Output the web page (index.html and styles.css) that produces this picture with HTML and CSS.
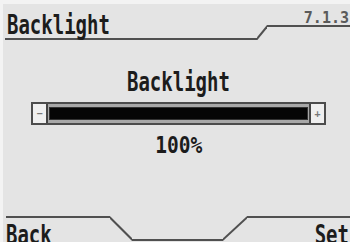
FILE: index.html
```html
<!DOCTYPE html>
<html>
<head>
<meta charset="utf-8">
<link rel="stylesheet" href="styles.css">
</head>
<body>
<div class="screen">
  <header class="topbar">
    <div class="title-tab"><span class="lcd lcd-left">Backlight</span></div>
    <svg class="diag" width="10" height="36" viewBox="0 0 10 36"><line x1="-0.5" y1="35.5" x2="10.5" y2="22"/></svg>
    <div class="ver-tab"><span class="ver">7.1.3</span></div>
  </header>
  <main class="content">
    <div class="heading"><span class="lcd lcd-center">Backlight</span></div>
    <div class="slider">
      <span class="cap">&minus;</span>
      <div class="track"><div class="fill" style="width:100%"></div></div>
      <span class="cap">+</span>
    </div>
    <div class="value"><span class="lcd lcd-center lcd-small">100%</span></div>
  </main>
  <footer class="softkeys">
    <div class="key key-left"><span class="lcd lcd-left">Back</span></div>
    <svg class="diag" width="22" height="26" viewBox="0 0 22 26"><line x1="-0.5" y1="1" x2="22.5" y2="24"/></svg>
    <div class="key-gap"></div>
    <svg class="diag" width="24" height="26" viewBox="0 0 24 26"><line x1="-0.5" y1="24" x2="24.5" y2="1"/></svg>
    <div class="key key-right"><span class="lcd lcd-right">Set</span></div>
  </footer>
</div>
</body>
</html>
```
FILE: styles.css
```css
html, body {
  margin: 0;
  padding: 0;
}
body {
  width: 350px;
  height: 242px;
  box-sizing: border-box;
  padding: 4px 0 0 3px;
  background: #f3f3f3;
  overflow: hidden;
  font-family: "DejaVu Sans Mono", monospace;
  font-weight: bold;
  color: #1c1c1c;
}
.screen {
  width: 347px;
  height: 238px;
  background: #e4e4e4;
  display: flex;
  flex-direction: column;
}
.lcd {
  display: inline-block;
  font-size: 26px;
  line-height: 25px;
  transform: scaleX(0.73);
  white-space: nowrap;
}
.lcd-left { transform-origin: left center; }
.lcd-right { transform-origin: right center; }
.lcd-center { transform-origin: center center; }
.lcd-small {
  font-size: 23px;
  line-height: 22px;
  transform: scaleX(0.85);
}

/* header */
.topbar {
  display: flex;
  align-items: flex-start;
  height: 36px;
}
.title-tab {
  width: 250px;
  margin-left: 2px;
  padding: 9px 0 0 2px;
  border-bottom: 2px solid #505050;
}
.diag {
  flex: none;
  display: block;
}
.diag line {
  stroke: #505050;
  stroke-width: 2;
}
.ver-tab {
  flex: 1;
  padding-top: 7px;
  border-bottom: 2px solid #505050;
  text-align: right;
  line-height: 14px;
}
.ver {
  font-size: 15px;
  color: #5a5a5a;
  padding-right: 1px;
}

/* content */
.content {
  display: flex;
  flex-direction: column;
  align-items: center;
  padding-top: 30px;
}
.heading {
  height: 25px;
  margin-left: 4px;
}
.slider {
  margin-top: 7px;
  margin-left: 4px;
  width: 295px;
  height: 23px;
  box-sizing: border-box;
  border: 2px solid #4c4c4c;
  background: #efefef;
  display: flex;
  align-items: stretch;
}
.cap {
  width: 13px;
  display: flex;
  align-items: center;
  justify-content: center;
  font-size: 10px;
  color: #777;
}
.track {
  flex: 1;
  border-left: 2px solid #444;
  border-right: 2px solid #444;
  background: #a8a8a8;
  padding: 3px 1px;
  display: flex;
}
.fill {
  background: #060606;
  border: 1px solid #333;
  box-sizing: border-box;
}
.value {
  margin-top: 9px;
  margin-left: 4px;
  height: 22px;
}

/* footer */
.softkeys {
  margin-top: auto;
  height: 26px;
  display: flex;
  align-items: flex-start;
}
.key {
  border-top: 2px solid #505050;
  padding-top: 5px;
  height: 19px;
}
.key-left {
  width: 104px;
  margin-left: 3px;
}
.key-gap {
  width: 91px;
  margin-top: 23px;
  border-top: 2px solid #505050;
}
.key-right {
  flex: 1;
  text-align: right;
  padding-right: 1px;
}
```
